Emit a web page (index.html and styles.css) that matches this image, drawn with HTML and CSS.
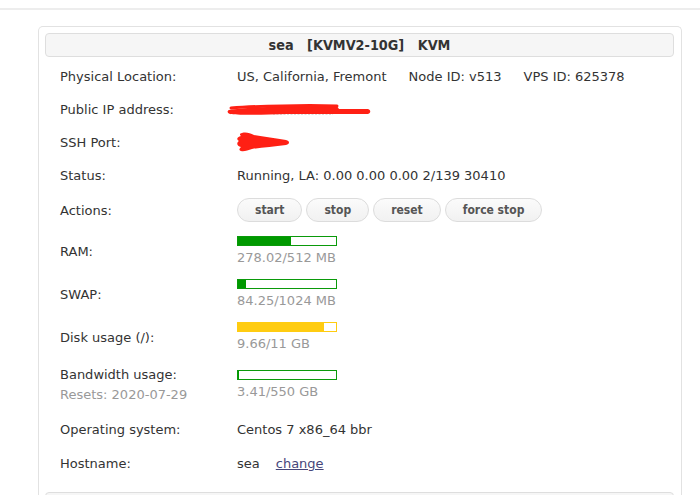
FILE: index.html
```html
<!DOCTYPE html>
<html>
<head>
<meta charset="utf-8">
<title>VPS</title>
<link rel="stylesheet" href="styles.css">
</head>
<body>
<div class="topbar"></div>
<div class="panel">
  <div class="titlebar">sea&nbsp;&nbsp; [KVMV2-10G]&nbsp;&nbsp; KVM</div>
  <div class="rows">
    <div class="row">
      <div class="label">Physical Location:</div>
      <div class="value">US, California, Fremont<span class="sep">Node ID: v513</span><span class="sep">VPS ID: 625378</span></div>
    </div>
    <div class="row">
      <div class="label">Public IP address:</div>
      <div class="value">
        <svg class="scribble-ip" width="146" height="16" viewBox="0 0 146 16">
          <path d="M46 12 L106 12" stroke="#b9b9b9" stroke-width="1.2" stroke-dasharray="2 1.5" fill="none"/>
          <path d="M2 8 C20 5 60 4 110 4 L112 7 L141 7 C144 8 144 11 141 12 L60 12 C30 13 10 13 3 12 C0 11 0 9 2 8 Z" fill="#ff2014"/>
          <path d="M4 6 C30 4 80 3 110 4" stroke="#ff2014" stroke-width="3" fill="none" stroke-linecap="round"/>
        </svg>
      </div>
    </div>
    <div class="row">
      <div class="label">SSH Port:</div>
      <div class="value">
        <svg class="scribble-ssh" width="58" height="22" viewBox="0 0 58 22">
          <path d="M8 2 C12 1 16 2 20 4 C30 6 42 7 52 9 C56 10 56 13 52 14 C40 16 28 16 18 18 C14 19 10 21 7 20 C4 19 6 17 7 16 C3 15 2 12 5 10 C2 8 3 6 7 5 C5 4 6 2 8 2 Z" fill="#ff2014"/>
        </svg>
      </div>
    </div>
    <div class="row">
      <div class="label">Status:</div>
      <div class="value">Running, LA: 0.00 0.00 0.00 2/139 30410</div>
    </div>
    <div class="row row-actions">
      <div class="label">Actions:</div>
      <div class="value buttons">
        <button class="btn">start</button>
        <button class="btn">stop</button>
        <button class="btn">reset</button>
        <button class="btn">force stop</button>
      </div>
    </div>
    <div class="row row-bar">
      <div class="label">RAM:</div>
      <div class="value">
        <div class="bar"><div class="fill" style="width:54.3%"></div></div>
        <div class="muted">278.02/512 MB</div>
      </div>
    </div>
    <div class="row row-bar">
      <div class="label">SWAP:</div>
      <div class="value">
        <div class="bar"><div class="fill" style="width:8.2%"></div></div>
        <div class="muted">84.25/1024 MB</div>
      </div>
    </div>
    <div class="row row-bar">
      <div class="label">Disk usage (/):</div>
      <div class="value">
        <div class="bar bar-warn"><div class="fill" style="width:87.8%"></div></div>
        <div class="muted">9.66/11 GB</div>
      </div>
    </div>
    <div class="row row-bar">
      <div class="label label-two">
        <div>Bandwidth usage:</div>
        <div class="muted">Resets: 2020-07-29</div>
      </div>
      <div class="value">
        <div class="bar"><div class="fill" style="width:1%"></div></div>
        <div class="muted">3.41/550 GB</div>
      </div>
    </div>
    <div class="row">
      <div class="label">Operating system:</div>
      <div class="value">Centos 7 x86_64 bbr</div>
    </div>
    <div class="row row-host">
      <div class="label">Hostname:</div>
      <div class="value">sea<a class="change" href="#">change</a></div>
    </div>
  </div>
  <div class="titlebar titlebar-next"></div>
</div>
</body>
</html>
```

FILE: styles.css
```css
html, body {
  margin: 0;
  padding: 0;
  background: #ffffff;
}

body {
  font-family: "DejaVu Sans", Verdana, sans-serif;
  font-size: 13px;
  line-height: 17px;
  color: #333333;
  height: 495px;
  overflow: hidden;
}

.topbar {
  height: 8px;
  border-bottom: 2px solid #ededed;
}

.panel {
  margin: 16px 0 0 38px;
  width: 644px;
  height: 469px;
  overflow: hidden;
  box-sizing: border-box;
  border: 1px solid #e2e2e2;
  border-bottom: none;
  border-radius: 5px 5px 0 0;
  padding: 6px 7px 0 6px;
}

.titlebar {
  height: 24px;
  box-sizing: border-box;
  border: 1px solid #dedede;
  border-radius: 4px;
  background: #f6f6f6;
  text-align: center;
  line-height: 22px;
  font-family: "DejaVu Sans Condensed", "DejaVu Sans", sans-serif;
  font-stretch: condensed;
  font-weight: bold;
  font-size: 14.3px;
  color: #333333;
}

.titlebar-next {
  margin-top: 12px;
}

.rows {
  margin-top: 3px;
  padding-left: 15px;
}

.row {
  display: flex;
  align-items: center;
  padding: 8px 0;
}

.label {
  width: 177px;
  flex: none;
}

.value {
  flex: 1;
}

.sep {
  margin-left: 22px;
}

.muted {
  color: #999999;
}

.scribble-ip {
  display: block;
  margin-left: -10px;
}

.scribble-ssh {
  display: block;
  margin: -3px 0 -2px -3px;
}

.row-actions {
  padding: 6px 0 9px;
}

.buttons {
  display: flex;
  gap: 4px;
}

.btn {
  height: 24px;
  box-sizing: border-box;
  padding: 0 17px;
  border: 1px solid #dcdcdc;
  border-radius: 12px;
  background: linear-gradient(#fbfbfb, #f1f1f1);
  font-family: "DejaVu Sans Condensed", "DejaVu Sans", sans-serif;
  font-stretch: condensed;
  font-weight: bold;
  font-size: 12px;
  line-height: 22px;
  color: #555555;
  cursor: pointer;
}

.row-bar {
  padding: 5px 0 8px;
}

.bar {
  width: 100px;
  height: 10px;
  box-sizing: border-box;
  border: 1px solid #0a9a0a;
  background: #ffffff;
  margin-bottom: 3px;
}

.fill {
  height: 100%;
  background: #009900;
}

.bar-warn {
  border-color: #ffcc11;
}

.bar-warn .fill {
  background: #ffcc11;
}

.label-two {
  line-height: 20px;
}

.row-host {
  padding-top: 9px;
}

.change {
  margin-left: 16px;
  color: #46467a;
  text-decoration: underline;
}
```
